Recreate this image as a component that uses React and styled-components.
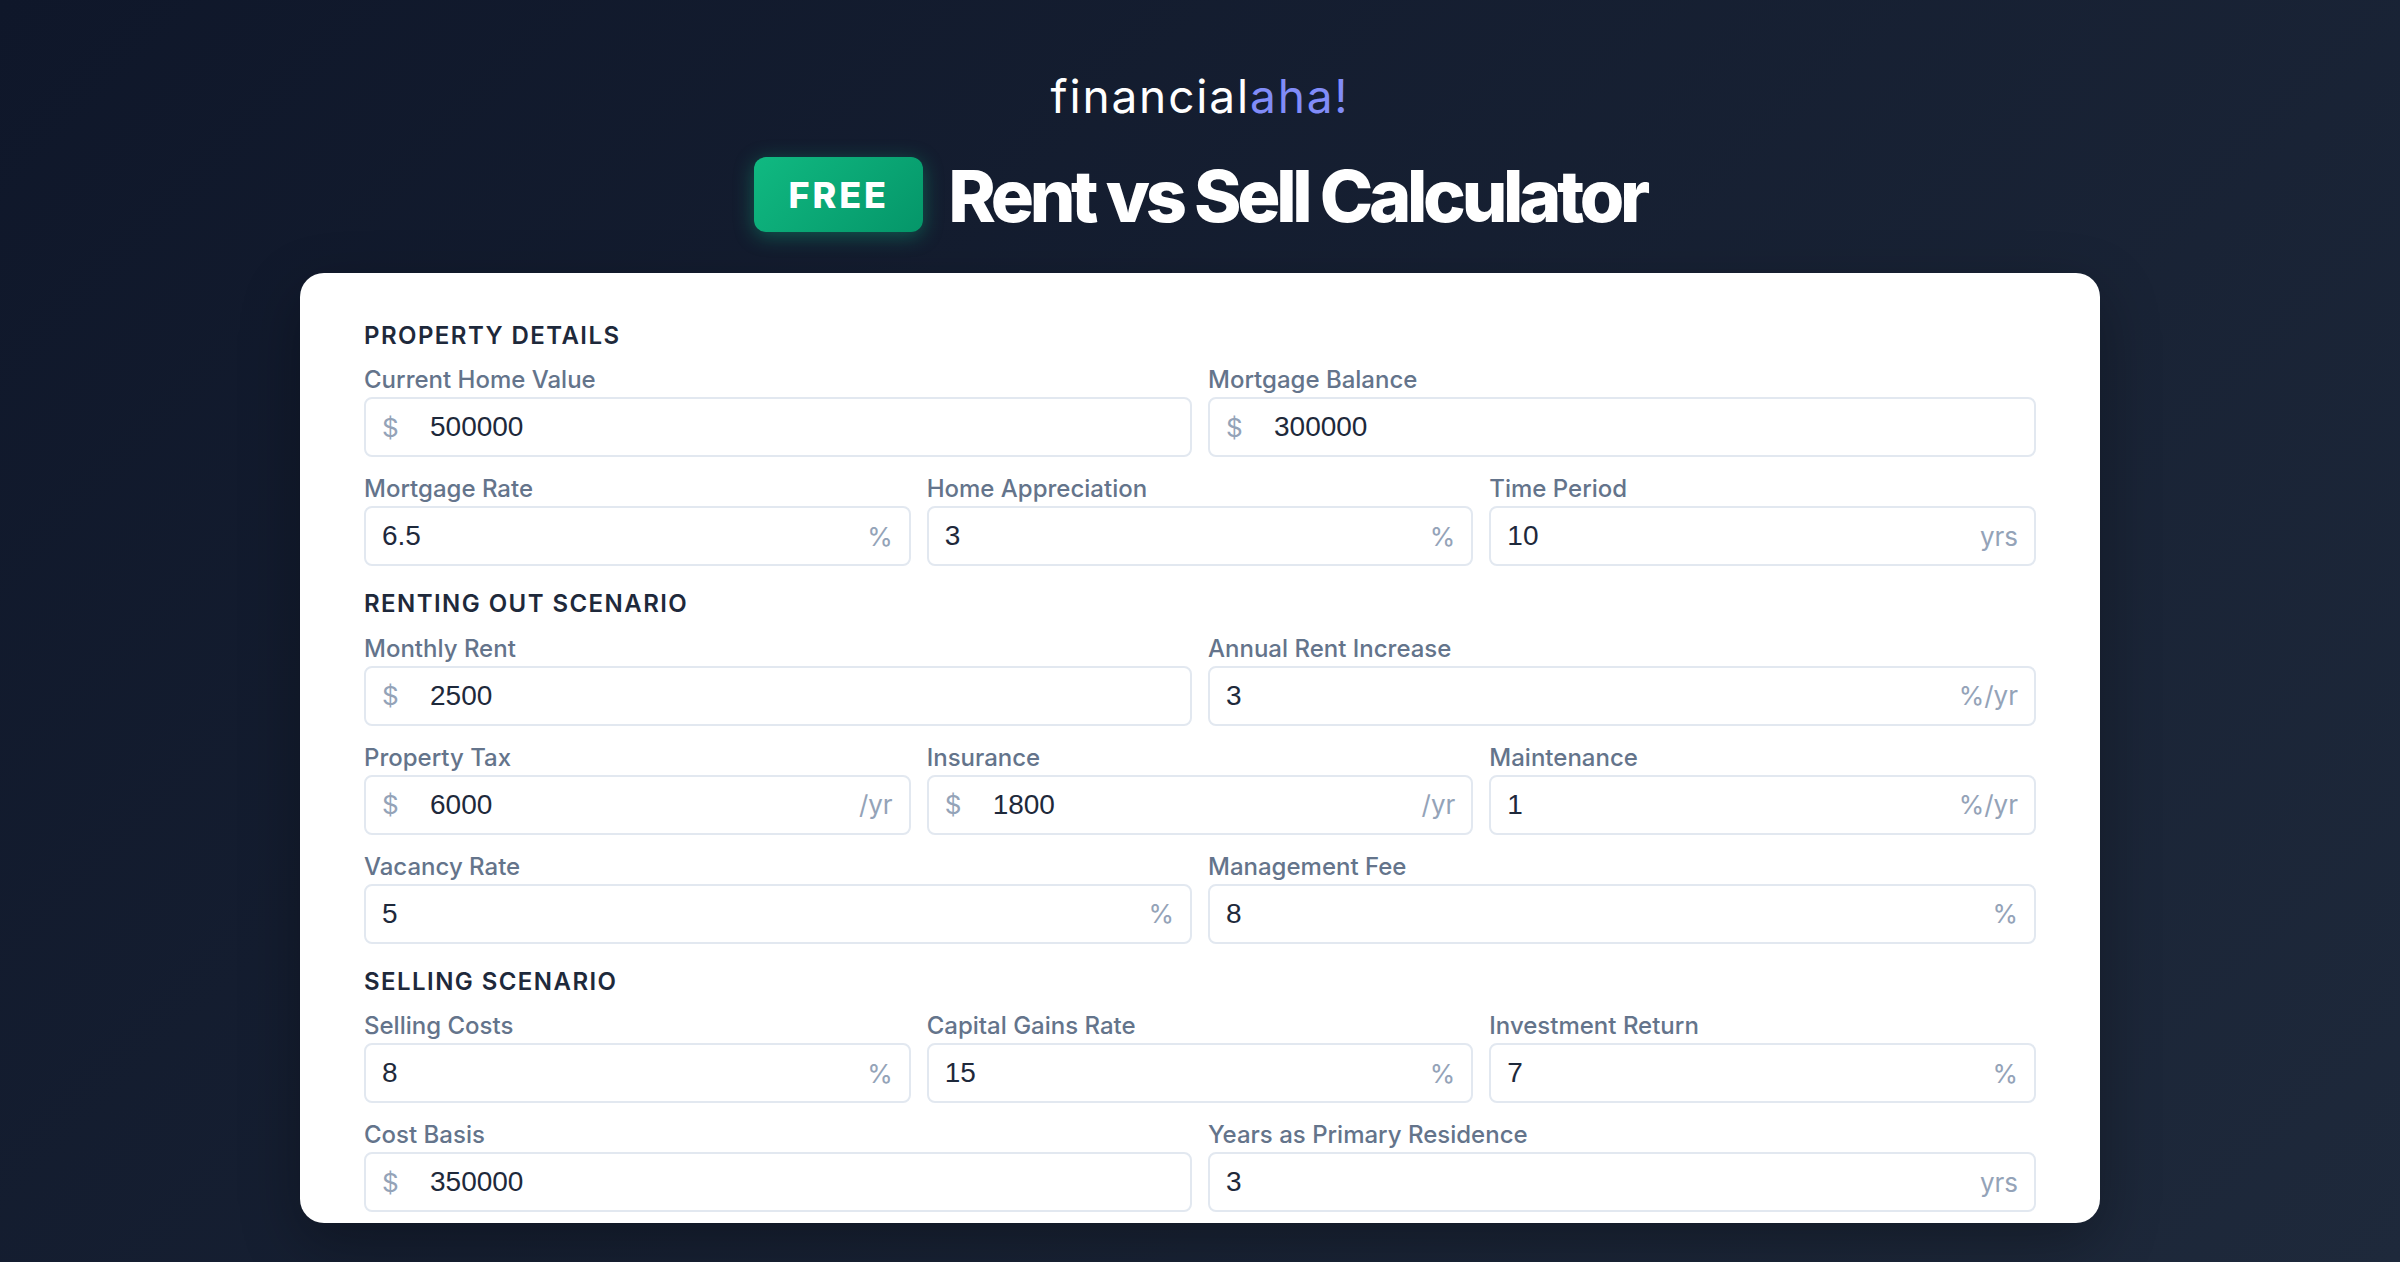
import React from 'react';
import styled, { createGlobalStyle } from 'styled-components';

const GlobalStyle = createGlobalStyle`
  * {
    box-sizing: border-box;
  }
  html,
  body {
    margin: 0;
    height: 100%;
  }
  body {
    font-family: Inter, 'Liberation Sans', sans-serif;
  }
`;

const Page = styled.div`
  height: 1262px;
  overflow: hidden;
  display: flex;
  flex-direction: column;
  align-items: center;
  padding: 64px 0 39px;
  background: linear-gradient(135deg, #0f172a 0%, #1e293b 100%);
`;

const Logo = styled.div`
  font-size: 46px;
  font-weight: 400;
  line-height: 64px;
  letter-spacing: 1.85px;
  color: #fff;

  span {
    color: #818cf8;
  }
`;

const TitleRow = styled.div`
  display: flex;
  align-items: center;
  gap: 25px;
  margin-top: 24px;
  margin-bottom: 37px;
`;

const Badge = styled.span`
  display: flex;
  align-items: center;
  justify-content: center;
  width: 169px;
  height: 75px;
  padding-top: 2px;
  border-radius: 12px;
  font-size: 36px;
  font-weight: 800;
  letter-spacing: 2.88px;
  color: #fff;
  background: linear-gradient(135deg, #10b981 0%, #059669 100%);
  box-shadow: 0 4px 20px rgba(16, 185, 129, 0.4);
`;

const Title = styled.h1`
  margin: 0;
  padding-top: 3px;
  font-size: 72px;
  font-weight: 800;
  line-height: 81px;
  letter-spacing: -4.32px;
  color: #fff;
`;

const Card = styled.main`
  flex: 1;
  min-height: 0;
  width: 1800px;
  overflow: hidden;
  padding: 47.5px 64px;
  border-radius: 24px;
  background: #fff;
  box-shadow: 0 20px 60px rgba(0, 0, 0, 0.3);
`;

const Section = styled.section`
  display: flex;
  flex-direction: column;
  gap: 16px;
  margin-bottom: 23px;
`;

const SectionTitle = styled.h2`
  margin: 0 0 -1.5px;
  font-size: 24px;
  font-weight: 600;
  line-height: 29px;
  letter-spacing: 1.44px;
  text-transform: uppercase;
  color: #1e293b;
`;

const Row = styled.div`
  display: grid;
  grid-template-columns: repeat(${(p) => p.$cols}, minmax(0, 1fr));
  gap: 16px;
`;

const Label = styled.label`
  display: block;
  margin-bottom: 3px;
  padding-top: 1px;
  font-size: 24px;
  font-weight: 500;
  line-height: 29px;
  color: #64748b;
`;

const InputBox = styled.div`
  display: flex;
  align-items: center;
  height: 60px;
  padding: 0 16px;
  border: 2px solid #e2e8f0;
  border-radius: 8px;
  background: #fff;
`;

const Prefix = styled.span`
  width: 48px;
  flex: none;
  font-size: 26px;
  color: #94a3b8;
`;

const Suffix = styled.span`
  flex: none;
  font-size: 26px;
  color: #94a3b8;
`;

const Value = styled.span`
  flex: 1;
  font-family: 'Liberation Sans', Arial, sans-serif;
  font-size: 28px;
  color: #1e293b;
`;

const sections = [
  {
    title: 'Property Details',
    rows: [
      [
        { label: 'Current Home Value', value: '500000', prefix: '$' },
        { label: 'Mortgage Balance', value: '300000', prefix: '$' },
      ],
      [
        { label: 'Mortgage Rate', value: '6.5', suffix: '%' },
        { label: 'Home Appreciation', value: '3', suffix: '%' },
        { label: 'Time Period', value: '10', suffix: 'yrs' },
      ],
    ],
  },
  {
    title: 'Renting Out Scenario',
    rows: [
      [
        { label: 'Monthly Rent', value: '2500', prefix: '$' },
        { label: 'Annual Rent Increase', value: '3', suffix: '%/yr' },
      ],
      [
        { label: 'Property Tax', value: '6000', prefix: '$', suffix: '/yr' },
        { label: 'Insurance', value: '1800', prefix: '$', suffix: '/yr' },
        { label: 'Maintenance', value: '1', suffix: '%/yr' },
      ],
      [
        { label: 'Vacancy Rate', value: '5', suffix: '%' },
        { label: 'Management Fee', value: '8', suffix: '%' },
      ],
    ],
  },
  {
    title: 'Selling Scenario',
    rows: [
      [
        { label: 'Selling Costs', value: '8', suffix: '%' },
        { label: 'Capital Gains Rate', value: '15', suffix: '%' },
        { label: 'Investment Return', value: '7', suffix: '%' },
      ],
      [
        { label: 'Cost Basis', value: '350000', prefix: '$' },
        { label: 'Years as Primary Residence', value: '3', suffix: 'yrs' },
      ],
    ],
  },
];

function Field({ label, value, prefix, suffix }) {
  return (
    <div>
      <Label>{label}</Label>
      <InputBox>
        {prefix && <Prefix>{prefix}</Prefix>}
        <Value>{value}</Value>
        {suffix && <Suffix>{suffix}</Suffix>}
      </InputBox>
    </div>
  );
}

export default function App() {
  return (
    <Page>
      <GlobalStyle />
      <Logo>
        financial<span>aha!</span>
      </Logo>
      <TitleRow>
        <Badge>FREE</Badge>
        <Title>Rent vs Sell Calculator</Title>
      </TitleRow>
      <Card>
        {sections.map((section) => (
          <Section key={section.title}>
            <SectionTitle>{section.title}</SectionTitle>
            {section.rows.map((row, i) => (
              <Row key={i} $cols={row.length}>
                {row.map((field) => (
                  <Field key={field.label} {...field} />
                ))}
              </Row>
            ))}
          </Section>
        ))}
      </Card>
    </Page>
  );
}
